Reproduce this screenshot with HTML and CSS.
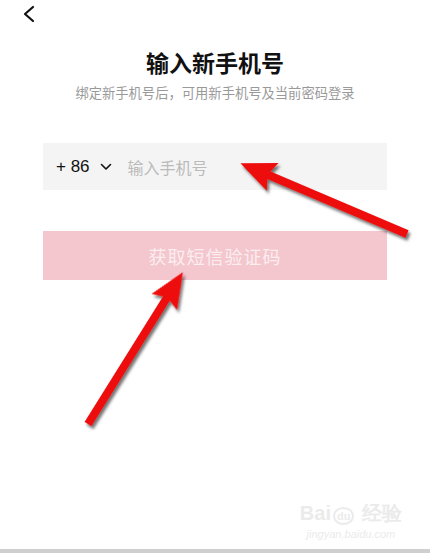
FILE: index.html
```html
<!DOCTYPE html>
<html lang="zh">
<head>
<meta charset="utf-8">
<link rel="stylesheet" href="styles.css">
</head>
<body>
<div class="page">
  <div class="nav">
    <svg class="back" width="14" height="18" viewBox="0 0 14 18"><path d="M11 2 L3 9 L11 16" fill="none" stroke="#111" stroke-width="2.2" stroke-linecap="round" stroke-linejoin="round"/></svg>
  </div>
  <h1 class="title">输入新手机号</h1>
  <p class="subtitle">绑定新手机号后，可用新手机号及当前密码登录</p>
  <div class="phone">
    <span class="code">+ 86</span>
    <svg class="caret" width="12" height="8" viewBox="0 0 12 8"><path d="M1.5 1.5 L6 6 L10.5 1.5" fill="none" stroke="#111" stroke-width="1.6" stroke-linecap="round" stroke-linejoin="round"/></svg>
    <span class="placeholder">输入手机号</span>
  </div>
  <div class="btn">获取短信验证码</div>
  <div class="bottom-bar"></div>

  <div class="watermark">
    <div class="wm-logo">Bai<span class="paw">du</span> 经验</div>
    <div class="wm-url">jingyan.baidu.com</div>
  </div>

  <svg class="arrows" width="430" height="553" viewBox="0 0 430 553">
    <defs>
      <filter id="sh" x="-20%" y="-20%" width="140%" height="140%">
        <feDropShadow dx="2" dy="3" stdDeviation="1.8" flood-color="#000" flood-opacity="0.55"/>
      </filter>
    </defs>
    <g filter="url(#sh)" fill="#ee0a0a">
      <g transform="translate(407 234) rotate(203.04)">
        <polygon points="0,-4 150,-4 146,-15 181,0 146,15 150,4 0,4"/>
      </g>
      <g transform="translate(88 424) rotate(-58)">
        <polygon points="0,-4 148,-4 144,-15 179,0 144,15 148,4 0,4"/>
      </g>
    </g>
  </svg>
</div>
</body>
</html>
```

FILE: styles.css
```css
* { box-sizing: border-box; }
html, body {
  margin: 0;
  padding: 0;
  background: #fff;
}
body {
  font-family: "Noto Sans CJK SC", "Noto Sans", sans-serif;
  color: #111;
}
.page {
  position: relative;
  width: 430px;
  height: 553px;
  overflow: hidden;
  display: flex;
  flex-direction: column;
}
.nav {
  height: 30px;
  padding-left: 22px;
  padding-top: 5px;
}
.back { display: block; }
.title {
  margin: 16px 0 0;
  font-size: 23px;
  line-height: 32px;
  font-weight: 700;
  text-align: center;
  color: #111;
}
.subtitle {
  margin: 6px 0 0;
  font-size: 13.3px;
  line-height: 18px;
  text-align: center;
  color: #999;
}
.phone {
  margin: 41px 43px 0;
  height: 47px;
  background: #f4f4f4;
  display: flex;
  align-items: center;
  padding-left: 13px;
}
.code {
  font-family: "Liberation Sans", Arial, sans-serif;
  font-size: 17px;
  color: #111;
}
.caret {
  margin-left: 10px;
  display: block;
}
.placeholder {
  margin-left: 16px;
  font-size: 16px;
  color: #bbb;
}
.btn {
  margin: 41px 43px 0;
  height: 49px;
  background: #f4c6cd;
  color: #fbeef0;
  font-size: 18px;
  letter-spacing: 1px;
  display: flex;
  align-items: center;
  justify-content: center;
}
.bottom-bar {
  margin-top: auto;
  height: 4px;
  background: #cfcfcf;
}
.watermark {
  position: absolute;
  right: 28px;
  bottom: 12px;
  color: #ebebeb;
  text-align: center;
  font-family: "Liberation Sans", sans-serif;
}
.wm-logo {
  font-size: 20px;
  font-weight: 700;
  line-height: 24px;
}
.paw {
  font-size: 11px;
  border: 2px solid #ebebeb;
  border-radius: 50%;
  padding: 1px 2px;
  margin: 0 2px;
}
.wm-url {
  font-size: 11px;
  font-style: italic;
  line-height: 13px;
}
.arrows {
  position: absolute;
  left: 0;
  top: 0;
  pointer-events: none;
}
```
